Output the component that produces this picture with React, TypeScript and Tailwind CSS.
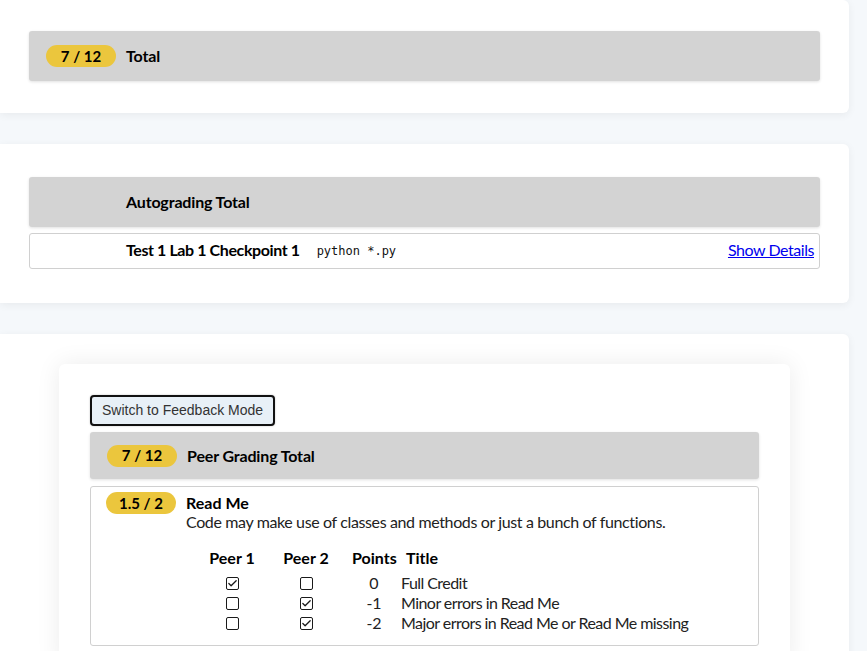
import { Check } from 'lucide-react';

const font = { fontFamily: 'Lato, "Noto Sans", sans-serif' };

function Badge({ text }: { text?: string }) {
  if (!text) return <span className="w-[70px] shrink-0" />;
  return (
    <span className="w-[70px] h-[22px] shrink-0 rounded-full bg-[#ebc63d] text-[15px] font-bold text-black flex items-center justify-center">
      {text}
    </span>
  );
}

function TotalBar({ badge, title, tall }: { badge?: string; title: string; tall?: boolean }) {
  return (
    <div
      className={`bg-[#d3d3d3] rounded-[3px] shadow-[0_1px_3px_rgba(0,0,0,0.12)] flex items-center gap-[10px] pl-[17px] ${
        tall ? 'h-[47px]' : 'h-[50px]'
      }`}
    >
      <Badge text={badge} />
      <span className="text-[16px] font-bold text-black tracking-[-0.15px]">{title}</span>
    </div>
  );
}

function Box({ checked }: { checked: boolean }) {
  return (
    <span className="w-[13px] h-[13px] border border-[#1a1a1a] rounded-[2px] bg-white flex items-center justify-center">
      {checked && <Check size={11} strokeWidth={2.8} className="text-[#1a1a1a]" />}
    </span>
  );
}

const rows = [
  { p1: true, p2: false, points: '0', title: 'Full Credit' },
  { p1: false, p2: true, points: '-1', title: 'Minor errors in Read Me' },
  { p1: false, p2: true, points: '-2', title: 'Major errors in Read Me or Read Me missing' },
];

export default function App() {
  return (
    <div className="min-h-[651px] bg-[#f5f8fb] text-black overflow-hidden" style={font}>
      <div className="w-[849px] flex flex-col gap-[31px]">
        {/* overall total */}
        <div className="bg-white rounded-r-[6px] shadow-[0_2px_8px_rgba(0,0,0,0.06)] pt-[31px] pb-[32px] px-[29px]">
          <TotalBar badge="7 / 12" title="Total" />
        </div>

        {/* autograding */}
        <div className="bg-white rounded-r-[6px] shadow-[0_2px_8px_rgba(0,0,0,0.06)] pt-[33px] pb-[34px] px-[29px]">
          <TotalBar title="Autograding Total" />
          <div className="mt-[6px] h-[36px] border border-[#d0d0d0] rounded-[3px] flex items-center pl-[96px] pr-[5px] pb-[2px]">
            <span className="text-[16px] font-bold tracking-[-0.4px]">Test 1 Lab 1 Checkpoint 1</span>
            <span className="ml-[17px] mt-[2px] text-[12px] text-[#111]" style={{ fontFamily: '"DejaVu Sans Mono", monospace' }}>
              python *.py
            </span>
            <a href="#" className="ml-auto text-[16px] text-[#0000ee] underline tracking-[-0.45px]">
              Show Details
            </a>
          </div>
        </div>

        {/* peer grading */}
        <div className="bg-white rounded-r-[6px] shadow-[0_2px_8px_rgba(0,0,0,0.06)] pt-[30px] pl-[59px] pr-[59px] h-[340px]">
          <div className="bg-white rounded-[6px] shadow-[0_0_24px_rgba(0,0,0,0.08)] pt-[31px] px-[31px] pb-[20px]">
            <button
              className="h-[31px] px-[10px] border-2 border-[#111] rounded-[4px] bg-[#e8f0f7] text-[#333] text-[14px] shadow-[0_0_2px_rgba(0,0,0,0.25)]"
              style={{ fontFamily: 'Arial, "Liberation Sans", sans-serif' }}
            >
              Switch to Feedback Mode
            </button>
            <div className="mt-[6px]">
              <TotalBar badge="7 / 12" title="Peer Grading Total" tall />
            </div>
            <div className="mt-[7px] border border-[#d0d0d0] rounded-[3px] pt-[5px] pl-[15px] pb-[12px]">
              <div className="flex gap-[10px]">
                <Badge text="1.5 / 2" />
                <div>
                  <div className="text-[16px] font-bold leading-[20px] mt-[1px]">Read Me</div>
                  <div className="text-[16px] leading-[20px] text-[#222] tracking-[-0.37px] -mt-[1px]">
                    Code may make use of classes and methods or just a bunch of functions.
                  </div>
                </div>
              </div>
              <div className="mt-[14px] ml-[98px] text-[16px]">
                <div className="flex h-[24px] items-center font-bold">
                  <span className="w-[56px] text-center">Peer 1</span>
                  <span className="w-[56px] ml-[18px] text-center">Peer 2</span>
                  <span className="w-[44px] ml-[18px] text-center">Points</span>
                  <span className="ml-[10px]">Title</span>
                </div>
                <div className="mt-[3px]">
                  {rows.map((r) => (
                    <div key={r.title} className="flex h-[20px] items-center text-[#222]">
                      <span className="w-[56px] flex justify-center pl-[1px]">
                        <Box checked={r.p1} />
                      </span>
                      <span className="w-[56px] ml-[18px] flex justify-center">
                        <Box checked={r.p2} />
                      </span>
                      <span className="w-[44px] ml-[18px] text-center">{r.points}</span>
                      <span className="ml-[5px] tracking-[-0.55px]">{r.title}</span>
                    </div>
                  ))}
                </div>
              </div>
            </div>
          </div>
        </div>
      </div>
    </div>
  );
}
